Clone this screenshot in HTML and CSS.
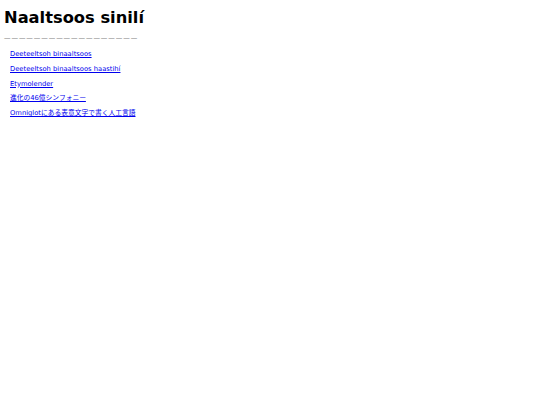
FILE: index.html
```html
<!DOCTYPE html>
<html>
<head>
<meta charset="utf-8">
<link rel="stylesheet" href="styles.css">
</head>
<body>
<h1 class="title">Naaltsoos sinilí</h1>
<div class="rule">——————————————————</div>
<ul class="links">
<li><a href="#">Deeteeltsoh binaaltsoos</a></li>
<li><a href="#">Deeteeltsoh binaaltsoos haastihí</a></li>
<li><a href="#">Etymolender</a></li>
<li><a href="#">進化の46億シンフォニー</a></li>
<li><a href="#">Omniglotにある表意文字で書く人工言語</a></li>
</ul>
</body>
</html>
```
FILE: styles.css
```css
html, body { margin: 0; padding: 0; background: #fff; }
body {
  font-family: "DejaVu Sans", "Noto Sans CJK JP", sans-serif;
  padding: 4px;
}
.title {
  font-size: 16.3px;
  font-weight: bold;
  margin: 4px 0 0 0;
  line-height: 20px;
  color: #000;
}
.rule {
  color: #666;
  font-size: 6.5px;
  letter-spacing: 0.95px;
  margin-top: 5px;
  line-height: 10px;
}
.links {
  list-style: none;
  margin: 4px 0 0 0;
  padding: 0 0 0 6px;
}
.links li {
  font-size: 6.75px;
  line-height: 14.75px;
}
.links a { color: #00e; }
```
